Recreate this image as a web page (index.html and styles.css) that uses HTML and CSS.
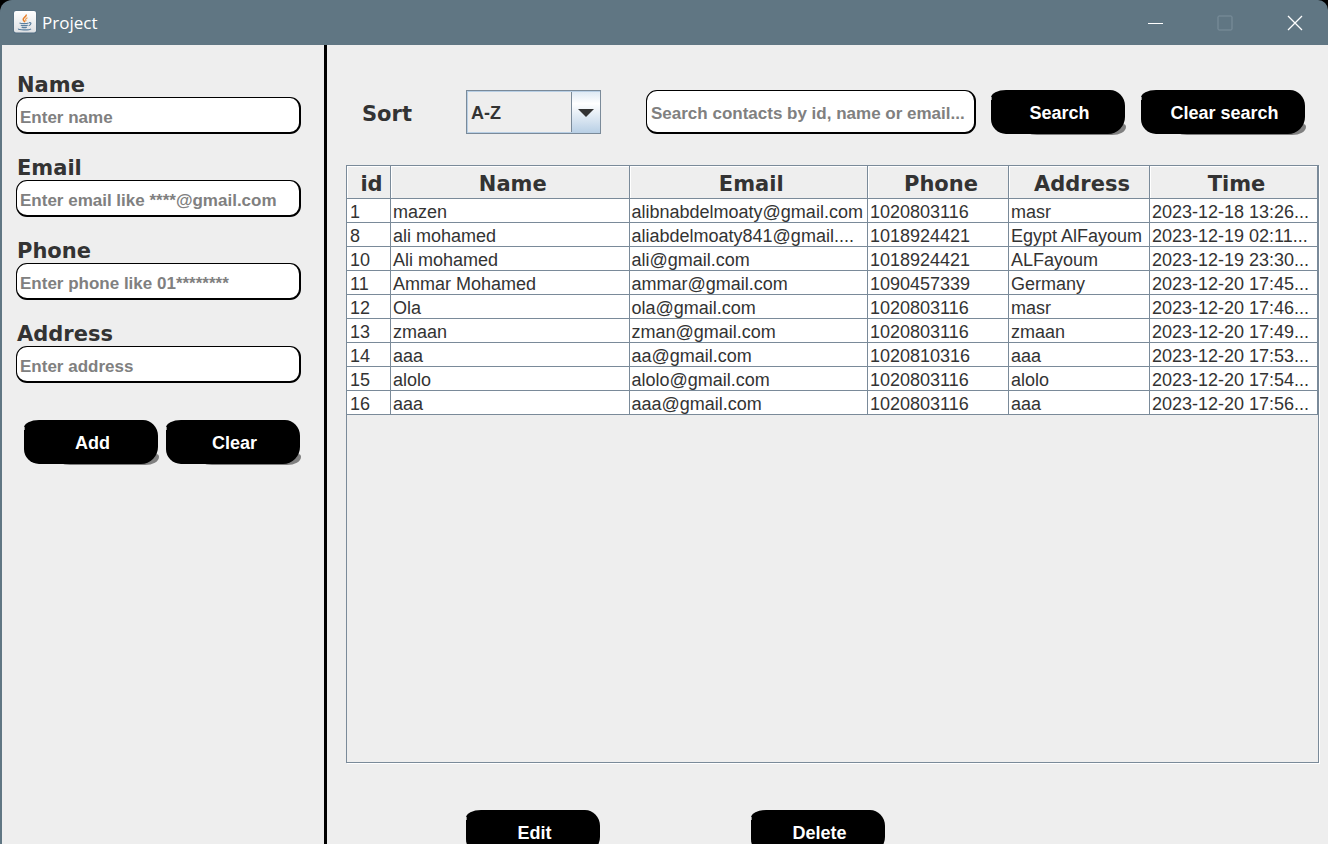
FILE: index.html
```html
<!DOCTYPE html>
<html lang="en">
<head>
<meta charset="utf-8">
<title>Project</title>
<link rel="stylesheet" href="styles.css">
</head>
<body>
<div class="window">
  <header class="titlebar">
    <svg class="app-icon" width="24" height="24" viewBox="0 0 24 24" aria-hidden="true">
      <defs><linearGradient id="tile" x1="0" y1="0" x2="0" y2="1"><stop offset="0" stop-color="#fff"/><stop offset="1" stop-color="#dde0e3"/></linearGradient></defs>
      <rect x="0.500" y="0.500" width="23" height="23" rx="2.500" fill="#4f6a80"/>
      <rect x="1" y="1" width="22" height="21.500" rx="2" fill="url(#tile)"/>
      <path d="M13.200 4.500c.8 2-3.400 3-3 5 .2 1 1.200 1.500 1.600 2.800" fill="none" stroke="#e8802a" stroke-width="1.500"/>
      <path d="M14.500 7.800c-1.800.8-2.500 1.600-1.300 3.400" fill="none" stroke="#f09a45" stroke-width="1.100"/>
      <path d="M6.500 13c2 .8 7 .8 9 0M7.800 15.200c2 .6 5 .6 7 0M8.600 17.200c1.800.6 3.800.6 5.200 0M16 12.800c2.600-.8 2.600 1.800-.3 2.900M5.500 18.600c-1 1.600 11 1.800 12.500.2" fill="none" stroke="#5b7f9e" stroke-width="1.200"/>
    </svg>
    <span class="app-name">Project</span>
    <div class="controls">
      <button class="control" aria-label="Minimize"><svg width="16" height="16" viewBox="0 0 16 16"><path d="M1 8.500h15" stroke="#fff"/></svg></button>
      <button class="control" aria-label="Maximize" disabled><svg width="16" height="16" viewBox="0 0 16 16"><rect x="1" y="1" width="14" height="14" rx="1" fill="none" stroke="#7c909c"/></svg></button>
      <button class="control" aria-label="Close"><svg width="16" height="16" viewBox="0 0 16 16"><path d="M1 1l14 14M15 1L1 15" stroke="#fff" stroke-width="1.300"/></svg></button>
    </div>
  </header>
  <div class="content">
    <form class="sidebar">
      <div class="field"><label class="label" for="name">Name</label><input class="text-box" id="name" type="text" placeholder="Enter name"></div>
      <div class="field"><label class="label" for="email">Email</label><input class="text-box" id="email" type="text" placeholder="Enter email like ****@gmail.com"></div>
      <div class="field"><label class="label" for="phone">Phone</label><input class="text-box" id="phone" type="text" placeholder="Enter phone like 01********"></div>
      <div class="field"><label class="label" for="address">Address</label><input class="text-box" id="address" type="text" placeholder="Enter address"></div>
      <div class="form-buttons">
        <button class="btn" type="button">Add</button>
        <button class="btn" type="button">Clear</button>
      </div>
    </form>
    <main class="main">
      <div class="toolbar">
        <label class="label sort-label" for="sort">Sort</label>
        <div class="combo">
          <select class="combo-select" id="sort"><option>A-Z</option><option>Z-A</option></select>
          <svg class="combo-arrow" width="16" height="8" viewBox="0 0 16 8" aria-hidden="true"><path d="M0 0h16L8 8z" fill="#333"/></svg>
        </div>
        <input class="text-box search-box" type="text" aria-label="Search contacts" placeholder="Search contacts by id, name or email...">
        <button class="btn" type="button">Search</button>
        <button class="btn btn-wide" type="button">Clear search</button>
      </div>
      <div class="table-frame">
        <table class="contacts">
          <colgroup><col class="col-id"><col><col><col class="col-mid"><col class="col-mid"><col class="col-time"></colgroup>
          <thead><tr><th>id</th><th>Name</th><th>Email</th><th>Phone</th><th>Address</th><th>Time</th></tr></thead>
          <tbody>
            <tr><td>1</td><td>mazen</td><td>alibnabdelmoaty@gmail.com</td><td>1020803116</td><td>masr</td><td>2023-12-18 13:26...</td></tr>
            <tr><td>8</td><td>ali mohamed</td><td>aliabdelmoaty841@gmail....</td><td>1018924421</td><td>Egypt AlFayoum</td><td>2023-12-19 02:11...</td></tr>
            <tr><td>10</td><td>Ali mohamed</td><td>ali@gmail.com</td><td>1018924421</td><td>ALFayoum</td><td>2023-12-19 23:30...</td></tr>
            <tr><td>11</td><td>Ammar Mohamed</td><td>ammar@gmail.com</td><td>1090457339</td><td>Germany</td><td>2023-12-20 17:45...</td></tr>
            <tr><td>12</td><td>Ola</td><td>ola@gmail.com</td><td>1020803116</td><td>masr</td><td>2023-12-20 17:46...</td></tr>
            <tr><td>13</td><td>zmaan</td><td>zman@gmail.com</td><td>1020803116</td><td>zmaan</td><td>2023-12-20 17:49...</td></tr>
            <tr><td>14</td><td>aaa</td><td>aa@gmail.com</td><td>1020810316</td><td>aaa</td><td>2023-12-20 17:53...</td></tr>
            <tr><td>15</td><td>alolo</td><td>alolo@gmail.com</td><td>1020803116</td><td>alolo</td><td>2023-12-20 17:54...</td></tr>
            <tr><td>16</td><td>aaa</td><td>aaa@gmail.com</td><td>1020803116</td><td>aaa</td><td>2023-12-20 17:56...</td></tr>
          </tbody>
        </table>
      </div>
      <div class="row-actions">
        <button class="btn" type="button">Edit</button>
        <button class="btn" type="button">Delete</button>
      </div>
    </main>
  </div>
</div>
</body>
</html>
```

FILE: styles.css
```css
* { box-sizing: border-box; }

body {
  margin: 0;
  background: #000;
  color: #333;
  font-family: "Liberation Sans", Arial, sans-serif;
  font-size: 18px;
}

.window {
  display: flex;
  flex-direction: column;
  height: 100vh;
  min-height: 640px;
  overflow: hidden;
  background: #607683;
  border-radius: 12px 10px 0 0;
}

.titlebar {
  display: flex;
  align-items: center;
  flex: none;
  height: 45px;
  padding: 0 0 0 13px;
}

.app-icon { display: block; margin-bottom: 2px; }

.app-name {
  margin-left: 5px;
  color: #fff;
  font-family: "Open Sans", "Noto Sans", sans-serif;
  font-size: 17px;
  line-height: 24px;
}

.controls { display: flex; gap: 4px; margin-left: auto; }

.control {
  display: flex;
  align-items: center;
  justify-content: center;
  width: 66px;
  height: 45px;
  padding: 0;
  border: 0;
  background: none;
}

.content {
  display: flex;
  flex: 1;
  min-height: 0;
  margin-left: 2px;
  background: #eee;
}

.sidebar {
  display: flex;
  flex-direction: column;
  gap: 20px;
  flex: none;
  width: 325px;
  padding: 26px 23px 0 14px;
  border-right: 3px solid #000;
}

.field { display: flex; flex-direction: column; }

.label {
  height: 26px;
  padding: 1px 0 0 1px;
  font-family: "DejaVu Sans", Verdana, sans-serif;
  font-size: 21px;
  font-weight: bold;
  line-height: 26px;
}

.text-box {
  width: 100%;
  height: 37px;
  padding: 5px 4px 0 3px;
  border: solid #000;
  border-width: 1px 2px 2px 1px;
  border-radius: 11px;
  background: #fff;
  color: #333;
  font: bold 17px "Liberation Sans", Arial, sans-serif;
}

.text-box::placeholder { color: #808080; opacity: 1; }

.form-buttons {
  display: flex;
  gap: 8px;
  margin-top: 17px;
  padding-left: 8px;
}

.form-buttons,
.toolbar,
.row-actions { isolation: isolate; }

.btn {
  position: relative;
  flex: none;
  width: 134px;
  height: 44px;
  padding: 2px 0 0 3px;
  border: 0;
  border-radius: 15px 15px 17px 15px / 8px 16px 17px 15px;
  background: #000;
  color: #fff;
  font: bold 18px "Liberation Sans", Arial, sans-serif;
}

.btn::before,
.btn::after {
  position: absolute;
  content: "";
}

/* grey edge showing under the lower right of the button */
.btn::before {
  z-index: -1;
  right: -1px;
  bottom: -1px;
  left: 32px;
  height: 11px;
  border-radius: 0 3px 14px 14px / 0 3px 8px 8px;
  background: #808080;
}

.btn::after {
  top: 7px;
  left: 0;
  width: 1px;
  height: 3px;
  background: #999;
}

.btn-wide { width: 164px; }

.main {
  display: flex;
  flex-direction: column;
  flex: 1;
  min-width: 0;
  padding: 45px 9px 0 19px;
}

.toolbar {
  display: flex;
  align-items: center;
  padding: 0 14px 0 15px;
}

.sort-label { width: 105px; height: 30px; padding-top: 4px; }

.combo { position: relative; width: 135px; height: 44px; margin-right: 45px; }

.combo-select {
  appearance: none;
  width: 100%;
  height: 100%;
  padding: 2px 32px 0 4px;
  border: 1px solid #7a8a99;
  border-radius: 0;
  background:
    linear-gradient(#7a8a99, #7a8a99) right 28px top / 1px 100% no-repeat,
    linear-gradient(#dce8f3, #fff 30%, #b8cfe5) right top / 28px 100% no-repeat,
    #eee;
  box-shadow: inset 1px 1px 0 #b8cfe5, inset 0 -1px 0 #b8cfe5;
  color: #333;
  font: bold 18px "Liberation Sans", Arial, sans-serif;
}

.combo-arrow { position: absolute; top: 19px; right: 7px; }

.search-box {
  flex: 1;
  min-width: 0;
  height: 44px;
  margin-right: 15px;
  padding: 4px 4px 0;
}

.toolbar .btn-wide { margin-left: 16px; }

.table-frame {
  flex: 1;
  min-height: 260px;
  margin-top: 31px;
  border: 1px solid #7a8a99;
  box-shadow: 1px 1px 0 #fff;
}

.contacts {
  width: 100%;
  table-layout: fixed;
  border-spacing: 0;
}

.col-id { width: 44px; }
.col-mid { width: 141px; }
.col-time { width: 168px; }

.contacts th,
.contacts td {
  overflow: hidden;
  border: solid #7a8a99;
  border-width: 0 1px 1px 0;
  white-space: nowrap;
}

.contacts th {
  height: 33px;
  padding: 4px 0 0 6px;
  box-shadow: inset 1px 1px 0 #fff;
  font-family: "DejaVu Sans", Verdana, sans-serif;
  font-size: 21px;
  font-weight: bold;
  line-height: 26px;
}

.contacts td {
  height: 24px;
  padding: 2px 0 0 2px;
  background: #fff;
  line-height: 20px;
}

.contacts td:first-child { padding-left: 3px; }

/* the action row runs past the lower edge of the window */
.row-actions {
  display: flex;
  flex: none;
  gap: 151px;
  height: 81px;
  padding: 47px 0 0 120px;
}
```
